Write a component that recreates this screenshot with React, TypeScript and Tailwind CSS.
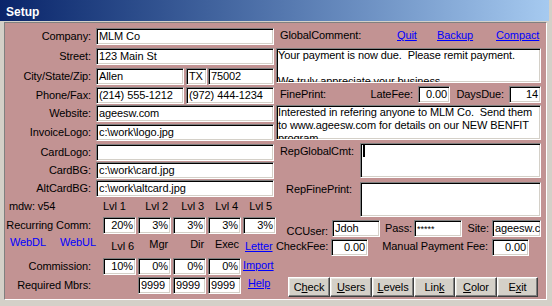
import React from 'react';

type P = { className?: string; children?: React.ReactNode };

function Field({ className = '', children }: P) {
  return (
    <div
      className={`h-[17px] shrink-0 overflow-hidden whitespace-nowrap border border-t-[#808080] border-l-[#808080] border-r-white border-b-white bg-white px-[2px] leading-[15px] shadow-[inset_1px_1px_0_#000,inset_-1px_-1px_0_#d4d0c8] ${className}`}
    >
      {children}
    </div>
  );
}

function Memo({ className = '', children }: P) {
  return (
    <div
      className={`h-[35px] overflow-hidden whitespace-pre border border-t-[#808080] border-l-[#808080] border-r-white border-b-white bg-white pl-[1px] leading-[13px] shadow-[inset_1px_1px_0_#000,inset_-1px_-1px_0_#d4d0c8] ${className}`}
    >
      {children}
    </div>
  );
}

function Btn({ className = '', children }: P) {
  return (
    <div
      className={`flex h-[20px] items-center justify-center border border-t-white border-l-white border-r-[#404040] border-b-[#404040] bg-[#d4d0c8] leading-[13px] shadow-[inset_-1px_-1px_0_#808080,inset_1px_1px_0_#e8e6e0] ${className}`}
    >
      {children}
    </div>
  );
}

const topRows = [
  { label: 'Company:', h: 'h-[20px]', field: <Field className="w-[178px]">MLM Co</Field> },
  { label: 'Street:', h: 'h-[20px]', field: <Field className="w-[178px]">123 Main St</Field> },
  {
    label: 'City/State/Zip:',
    h: 'h-[19px]',
    field: (
      <>
        <Field className="w-[88px]">Allen</Field>
        <Field className="ml-[2px] w-[21px]">TX</Field>
        <Field className="ml-[1px] w-[66px]">75002</Field>
      </>
    ),
  },
  {
    label: 'Phone/Fax:',
    h: 'h-[18px]',
    field: (
      <>
        <Field className="w-[88px]">(214) 555-1212</Field>
        <Field className="ml-[2px] w-[88px]">(972) 444-1234</Field>
      </>
    ),
  },
  { label: 'Website:', h: 'h-[19px]', field: <Field className="w-[178px]">ageesw.com</Field> },
  { label: 'InvoiceLogo:', h: 'h-[20px]', field: <Field className="w-[178px]">c:\work\logo.jpg</Field> },
  { label: 'CardLogo:', h: 'h-[18px]', field: <Field className="w-[178px]" /> },
  { label: 'CardBG:', h: 'h-[18px]', field: <Field className="w-[178px]">c:\work\card.jpg</Field> },
  { label: 'AltCardBG:', h: 'h-[17px]', field: <Field className="w-[178px]">c:\work\altcard.jpg</Field> },
];

const grid = 'grid grid-cols-[96px_33px_33px_33px_33px_33px] gap-x-[2px] whitespace-nowrap';

function LeftSide() {
  return (
    <div className="w-[271px] shrink-0 whitespace-nowrap pt-[5px]">
      {topRows.map((r) => (
        <div key={r.label} className={`flex items-start ${r.h}`}>
          <div className="h-[17px] w-[86px] text-right leading-[17px]">{r.label}</div>
          <div className="ml-[5px] flex">{r.field}</div>
        </div>
      ))}

      <div className={`${grid} h-[20px] pt-[3px] leading-[13px]`}>
        <div className="pl-[4px]">mdw: v54</div>
        <div className="pr-[12px] text-right">Lvl 1</div>
        <div className="pr-[3px] text-right">Lvl 2</div>
        <div className="pr-[2px] text-right">Lvl 3</div>
        <div className="pr-[3px] text-right">Lvl 4</div>
        <div className="pr-[4px] text-right">Lvl 5</div>
      </div>

      <div className={`${grid} h-[17px]`}>
        <div className="pr-[10px] text-right leading-[17px]">Recurring Comm:</div>
        <Field className="text-right">20%</Field>
        <Field className="text-right">3%</Field>
        <Field className="text-right">3%</Field>
        <Field className="text-right">3%</Field>
        <Field className="text-right">3%</Field>
      </div>

      <div className={`${grid} h-[24px] items-start leading-[13px]`}>
        <div className="mt-[2px] flex pl-[5px] text-[#0000ff]">
          <span className="w-[50px] shrink-0">WebDL</span>
          <span>WebUL</span>
        </div>
        <div className="mt-[6px] pr-[2px] text-right">Lvl 6</div>
        <div className="mt-[4px] pr-[3px] text-right">Mgr</div>
        <div className="mt-[4px] pr-[2px] text-right">Dir</div>
        <div className="mt-[4px] pr-[2px] text-right">Exec</div>
        <div className="mt-[6px] pl-[2px] text-[#0000ff] underline">Letter</div>
      </div>

      <div className={`${grid} h-[17px]`}>
        <div className="pr-[10px] text-right leading-[17px]">Commission:</div>
        <Field className="text-right">10%</Field>
        <Field className="text-right">0%</Field>
        <Field className="text-right">0%</Field>
        <Field className="text-right">0%</Field>
        <div className="leading-[15px] text-[#0000ff] underline">Import</div>
      </div>

      <div className={`${grid} mt-[2px] h-[17px]`}>
        <div className="pr-[10px] text-right leading-[17px]">Required Mbrs:</div>
        <div />
        <Field>9999</Field>
        <Field>9999</Field>
        <Field>9999</Field>
        <div className="pl-[5px] leading-[13px] text-[#0000ff] underline">Help</div>
      </div>
    </div>
  );
}

function RightSide() {
  return (
    <div className="flex w-[265px] shrink-0 flex-col whitespace-nowrap">
      <div className="flex h-[25px] pt-[6px] leading-[13px]">
        <span className="w-[121px] shrink-0 pl-[4px]">GlobalComment:</span>
        <span className="w-[40px] shrink-0 text-[#0000ff] underline">Quit</span>
        <span className="w-[59px] shrink-0 text-[#0000ff] underline">Backup</span>
        <span className="text-[#0000ff] underline">Compact</span>
      </div>

      <Memo>{'Your payment is now due.  Please remit payment.\n\nWe truly appreciate your business.'}</Memo>

      <div className="mt-[3px] flex h-[17px] items-center">
        <div className="flex w-[142px] shrink-0 justify-between pl-[4px] pr-[5px]">
          <span>FinePrint:</span>
          <span>LateFee:</span>
        </div>
        <Field className="w-[32px] text-right">0.00</Field>
        <div className="w-[59px] shrink-0 pr-[5px] text-right">DaysDue:</div>
        <Field className="w-[32px] text-right">14</Field>
      </div>

      <Memo className="mt-[2px]">
        {'Interested in refering anyone to MLM Co.  Send them\nto www.ageesw.com for details on our NEW BENFIT\nprogram.'}
      </Memo>

      <div className="mt-[3px] flex h-[35px]">
        <div className="w-[84px] shrink-0 pl-[4px] pt-[2px] leading-[13px]">RepGlobalCmt:</div>
        <Memo className="w-[181px]">
          <div className="ml-[1px] mt-[1px] h-[12px] w-[2px] bg-black" />
        </Memo>
      </div>

      <div className="mt-[4px] flex h-[35px]">
        <div className="w-[84px] shrink-0 pr-[8px] pt-[1px] text-right leading-[13px]">RepFinePrint:</div>
        <Memo className="w-[181px]" />
      </div>

      <div className="mt-[3px] flex h-[17px] items-start leading-[13px]">
        <div className="mt-[5px] w-[56px] shrink-0 pr-[4px] text-right">CCUser:</div>
        <Field className="w-[48px]">Jdoh</Field>
        <div className="mt-[2px] w-[34px] shrink-0 pr-[2px] text-right">Pass:</div>
        <Field className="w-[48px] pt-[1px] text-[9px] leading-[9px] tracking-normal">*****</Field>
        <div className="mt-[2px] w-[30px] shrink-0 pr-[3px] text-right">Site:</div>
        <Field className="w-[49px]">ageesw.com</Field>
      </div>

      <div className="mt-[2px] flex h-[17px] items-start leading-[13px]">
        <div className="mt-[1px] w-[55px] shrink-0 pr-[4px] text-right">CheckFee:</div>
        <Field className="w-[37px] text-right">0.00</Field>
        <div className="mt-[1px] w-[124px] shrink-0 pr-[4px] text-right">Manual Payment Fee:</div>
        <Field className="w-[37px] text-right">0.00</Field>
      </div>

      <div className="mt-[21px] flex pl-[12px]">
        <Btn className="w-[42px]">
          C<span className="underline">h</span>eck
        </Btn>
        <Btn className="w-[42px]">
          <span className="underline">U</span>sers
        </Btn>
        <Btn className="w-[42px]">
          <span className="underline">L</span>evels
        </Btn>
        <Btn className="w-[41px]">
          Lin<span className="underline">k</span>
        </Btn>
        <Btn className="w-[42px]">
          <span className="underline">C</span>olor
        </Btn>
        <Btn className="w-[41px]">
          E<span className="underline">x</span>it
        </Btn>
      </div>
    </div>
  );
}

export default function App() {
  return (
    <div className="flex h-[306px] w-[552px] flex-col overflow-hidden bg-[#d4d0c8] font-['Liberation_Sans',Arial,sans-serif] text-[11px] tracking-[-0.1px] text-black">
      <div className="mr-[3px] h-[21px] shrink-0 bg-linear-to-r from-[#0a246a] to-[#a6caf0] pl-[6px] pt-[3px] text-[12px] font-bold leading-[18px] tracking-normal text-white">
        Setup
      </div>
      <div className="min-h-0 flex-1 pb-[6px] pl-[4px] pr-[5px] pt-[1px]">
        <div className="flex h-full border border-t-[#808080] border-l-[#808080] border-r-white border-b-white bg-[#c29393]">
          <LeftSide />
          <RightSide />
        </div>
      </div>
    </div>
  );
}
